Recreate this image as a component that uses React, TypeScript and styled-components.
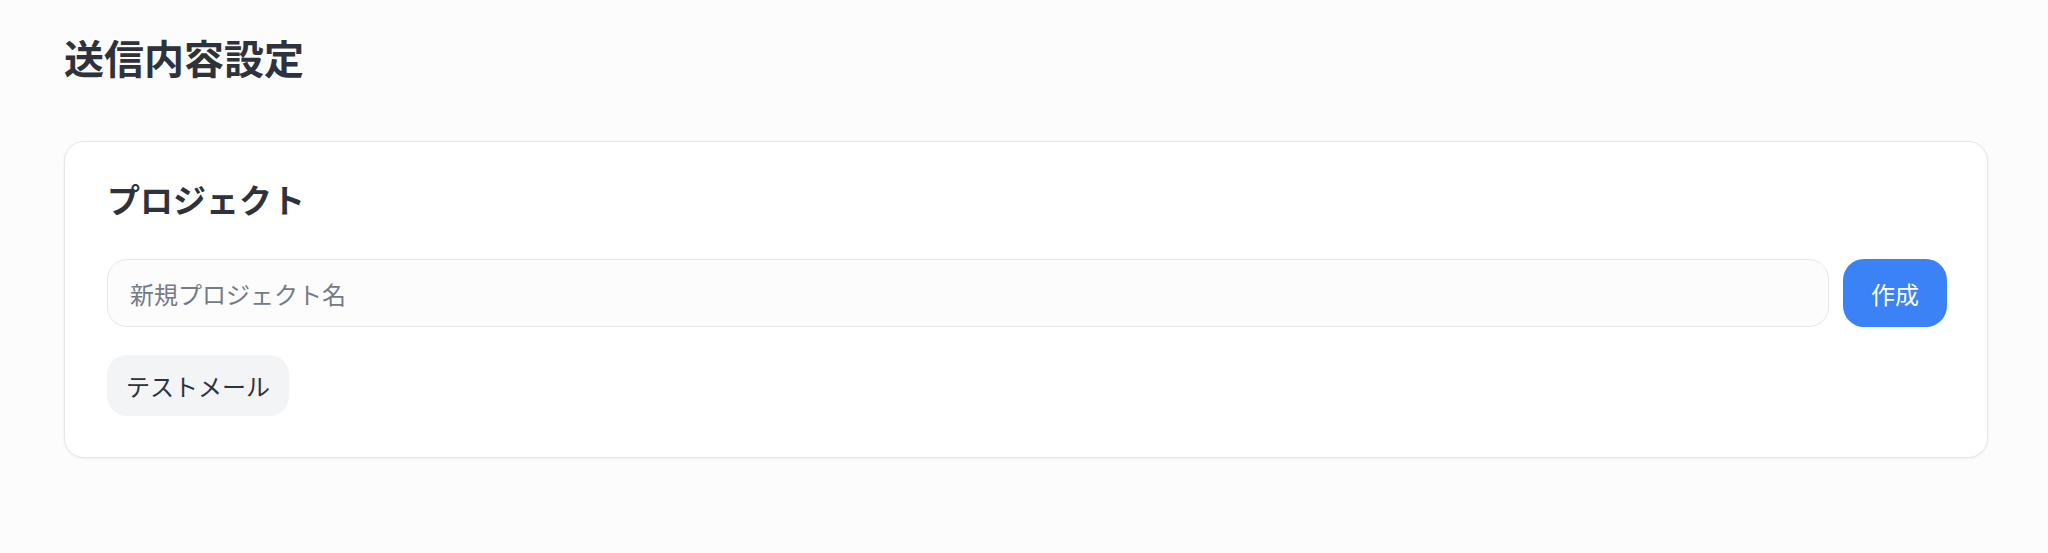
import styled, { createGlobalStyle } from "styled-components"

const GlobalStyle = createGlobalStyle`
  html, body {
    margin: 0;
    padding: 0;
    background: #fcfcfd;
  }
  body {
    font-family: "Noto Sans CJK JP", "Noto Sans", sans-serif;
    color: #2e323b;
  }
  * {
    box-sizing: border-box;
  }
`

const App = () => {
  return (
    <>
      <GlobalStyle />
      <Page>
        <Title>送信内容設定</Title>
        <Card>
          <CardTitle>プロジェクト</CardTitle>
          <CreateRow>
            <NameInput placeholder="新規プロジェクト名" />
            <CreateButton>作成</CreateButton>
          </CreateRow>
          <ProjectList>
            <ProjectChip>テストメール</ProjectChip>
          </ProjectList>
        </Card>
      </Page>
    </>
  )
}

export default App

const Page = styled.main`
  padding: 33px 60px 40px 64px;
`

const Title = styled.h1`
  margin: 0 0 60px 0;
  font-size: 40px;
  line-height: 48px;
  font-weight: 700;
  color: #2e323b;
`

const Card = styled.section`
  background: #ffffff;
  border: 1px solid #e5e7eb;
  border-radius: 20px;
  box-shadow: 0 1px 3px rgba(0, 0, 0, 0.06);
  padding: 37px 40px 41px 42px;
`

const CardTitle = styled.h2`
  margin: 0 0 40px 0;
  font-size: 33px;
  line-height: 40px;
  font-weight: 700;
  color: #2e323b;
`

const CreateRow = styled.div`
  display: flex;
  gap: 14px;
  height: 68px;
`

const NameInput = styled.input`
  flex: 1;
  height: 100%;
  border: 1px solid #e5e7eb;
  border-radius: 20px;
  background: #fcfcfd;
  padding: 0 22px;
  font-family: inherit;
  font-size: 24px;
  color: #2e323b;
  outline: none;
  &::placeholder {
    color: #757a85;
  }
`

const CreateButton = styled.button`
  height: 100%;
  border: none;
  border-radius: 21px;
  background: #3b82f6;
  color: #ffffff;
  padding: 0 28px;
  font-family: inherit;
  font-size: 24px;
  cursor: pointer;
`

const ProjectList = styled.div`
  display: flex;
  flex-wrap: wrap;
  gap: 12px;
  margin-top: 28px;
`

const ProjectChip = styled.button`
  height: 61px;
  border: none;
  border-radius: 20px;
  background: #f3f4f6;
  color: #2e323b;
  padding: 0 19px;
  font-family: inherit;
  font-size: 24px;
  cursor: pointer;
`
